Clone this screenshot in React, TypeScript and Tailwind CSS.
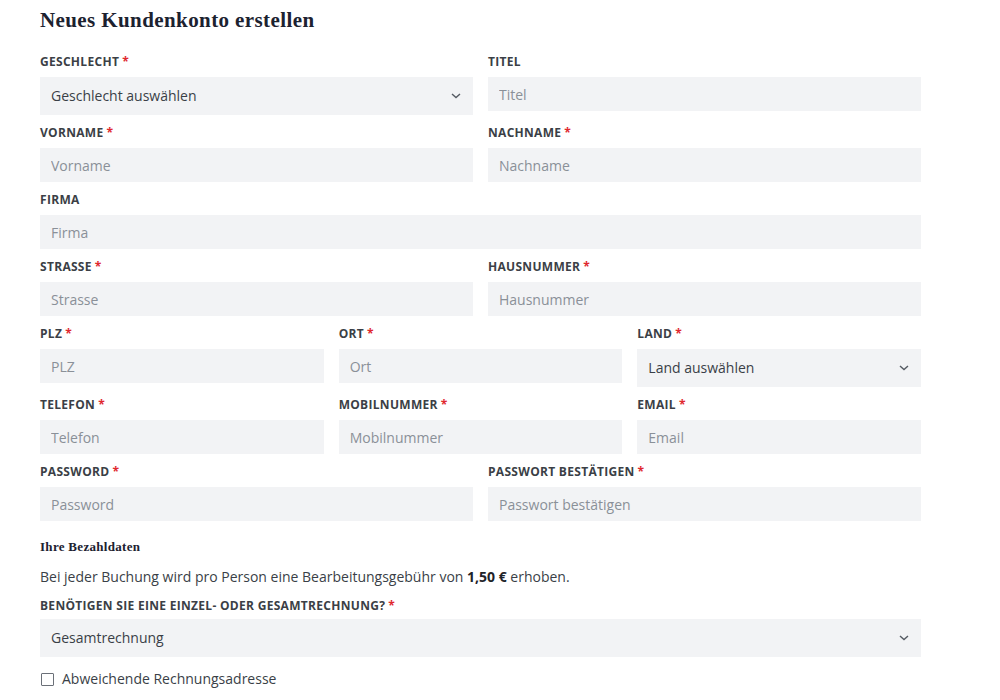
import React from 'react'

const sans = { fontFamily: '"Open Sans", "Liberation Sans", sans-serif' }
const serif = { fontFamily: '"Liberation Serif", "DejaVu Serif", serif' }

function Label({ text, required }: { text: string; required?: boolean }) {
  return (
    <label className="block text-[12px] font-bold leading-4 uppercase text-[#3b3f46] mb-[7px] tracking-[0.3px]">
      {text}
      {required && <span className="text-[#e0282e] ml-[3px]">*</span>}
    </label>
  )
}

function Chevron() {
  return (
    <svg width="10" height="6" viewBox="0 0 10 6" className="shrink-0">
      <polyline points="1,1 5,4.6 9,1" fill="none" stroke="#555b63" strokeWidth="1.4" />
    </svg>
  )
}

function Input({ label, placeholder, required }: { label: string; placeholder: string; required?: boolean }) {
  return (
    <div>
      <Label text={label} required={required} />
      <input
        placeholder={placeholder}
        className="w-full h-[34px] bg-[#f2f3f5] px-[11px] text-[14px] text-[#3a3f47] placeholder:text-[#8a9098] outline-none"
        style={sans}
      />
    </div>
  )
}

function Select({ label, value, required }: { label: string; value: string; required?: boolean }) {
  return (
    <div>
      <Label text={label} required={required} />
      <div className="w-full h-[38px] bg-[#f2f3f5] pl-[11px] pr-[12px] flex items-center justify-between text-[14px] text-[#3a3f47]">
        <span className="-mt-[2px]">{value}</span>
        <Chevron />
      </div>
    </div>
  )
}

export default function App() {
  return (
    <div className="bg-white min-h-[700px] pl-[40px] pt-[6px]" style={sans}>
      <div className="w-[881px]">
        <h1 className="text-[21px] leading-7 font-bold text-[#1c2230] mb-[20px] tracking-[0.4px]" style={serif}>
          Neues Kundenkonto erstellen
        </h1>

        <div className="grid grid-cols-2 gap-x-[15px] items-start mb-[10px]">
          <Select label="Geschlecht" value="Geschlecht auswählen" required />
          <Input label="Titel" placeholder="Titel" />
        </div>
        <div className="grid grid-cols-2 gap-x-[15px] items-start mb-[10px]">
          <Input label="Vorname" placeholder="Vorname" required />
          <Input label="Nachname" placeholder="Nachname" required />
        </div>
        <div className="mb-[10px]">
          <Input label="Firma" placeholder="Firma" />
        </div>
        <div className="grid grid-cols-2 gap-x-[15px] items-start mb-[10px]">
          <Input label="Strasse" placeholder="Strasse" required />
          <Input label="Hausnummer" placeholder="Hausnummer" required />
        </div>
        <div className="grid grid-cols-3 gap-x-[15px] items-start mb-[10px]">
          <Input label="PLZ" placeholder="PLZ" required />
          <Input label="Ort" placeholder="Ort" required />
          <Select label="Land" value="Land auswählen" required />
        </div>
        <div className="grid grid-cols-3 gap-x-[15px] items-start mb-[10px]">
          <Input label="Telefon" placeholder="Telefon" required />
          <Input label="Mobilnummer" placeholder="Mobilnummer" required />
          <Input label="Email" placeholder="Email" required />
        </div>
        <div className="grid grid-cols-2 gap-x-[15px] items-start">
          <Input label="Password" placeholder="Password" required />
          <Input label="Passwort bestätigen" placeholder="Passwort bestätigen" required />
        </div>

        <h3 className="mt-[18px] text-[13px] leading-4 font-bold text-[#1c2230] tracking-[0.3px]" style={serif}>
          Ihre Bezahldaten
        </h3>
        <p className="mt-[12px] text-[14px] leading-5 text-[#3a3f47]">
          Bei jeder Buchung wird pro Person eine Bearbeitungsgebühr von{' '}
          <strong className="font-bold text-[#1f2328]">1,50 €</strong> erhoben.
        </p>

        <div className="mt-[11px]">
          <label className="block text-[12px] font-bold leading-4 uppercase text-[#3b3f46] mb-[5px] tracking-[0.3px]">
            Benötigen Sie eine Einzel- oder Gesamtrechnung?
            <span className="text-[#e0282e] ml-[3px]">*</span>
          </label>
          <div className="w-full h-[38px] bg-[#f2f3f5] pl-[11px] pr-[12px] flex items-center justify-between text-[14px] text-[#3a3f47]">
            <span className="-mt-[2px]">Gesamtrechnung</span>
            <Chevron />
          </div>
        </div>

        <label className="mt-[12px] flex items-center gap-[8px] text-[14px] leading-5 text-[#3a3f47]">
          <span className="ml-[1px] w-[13px] h-[13px] border border-[#6b7078] rounded-[1px] bg-white" />
          Abweichende Rechnungsadresse
        </label>
      </div>
    </div>
  )
}
